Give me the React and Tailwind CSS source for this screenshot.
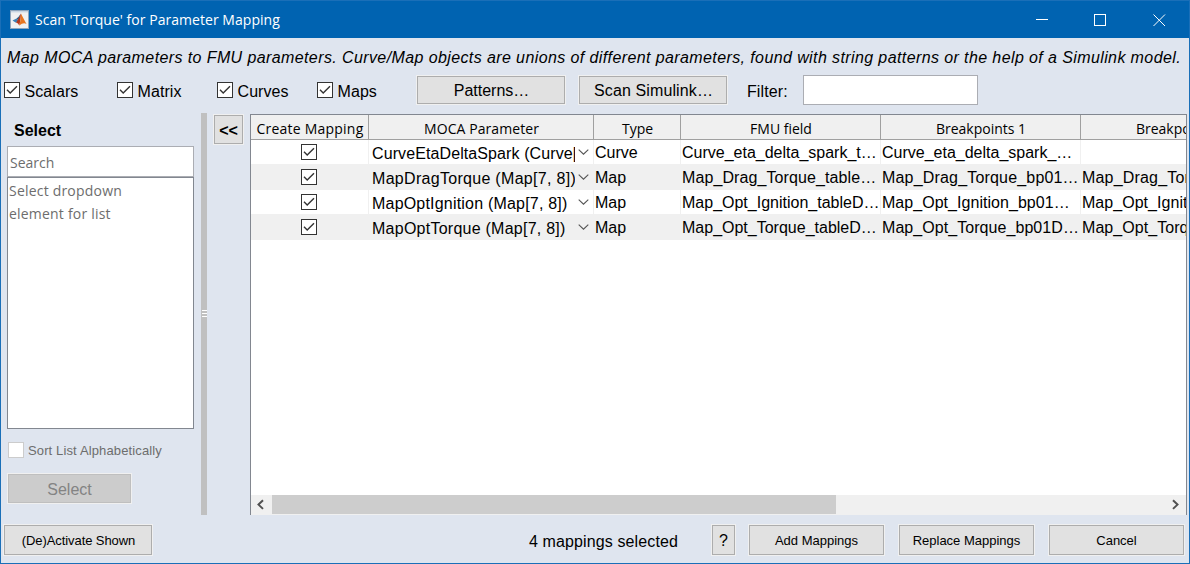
import React from 'react';

function Check({ className = '' }) {
  return (
    <span className={`block h-4 w-4 shrink-0 border border-[#333333] bg-white ${className}`}>
      <svg viewBox="0 0 14 14" className="block h-[14px] w-[14px]" fill="none" stroke="#333333" strokeWidth="1.4">
        <path d="M2 6.8 L5.2 10 L12 3.2" />
      </svg>
    </span>
  );
}

function Button({ className = '', children }) {
  return (
    <button className={`flex shrink-0 items-center justify-center whitespace-nowrap border border-[#adadad] bg-[#e1e1e1] pt-[2px] outline outline-1 outline-[#f0f0f0] ${className}`}>
      {children}
    </button>
  );
}

function Option({ label, className }) {
  return (
    <label className={`flex shrink-0 items-center gap-[4.5px] whitespace-nowrap ${className}`}>
      <Check />
      <span className="pt-[3px] tracking-[0.08px]">{label}</span>
    </label>
  );
}

function TitleBar() {
  return (
    <header className="flex h-[37px] shrink-0 items-center bg-[#0063b1] pl-[9px] text-white">
      <svg viewBox="0 0 19 19" className="h-[19px] w-[19px]">
        <rect width="19" height="19" fill="#8fa5bb" />
        <rect x="1" y="2" width="17" height="16" fill="#f1f1f1" />
        <rect x="1" y="1" width="17" height="1.4" fill="#c9d6e3" />
        <path d="M2.5 10.5 L6.5 8.6 L8.3 10.2 L6 12.8 Z" fill="#3d7fb5" />
        <path d="M6.5 8.6 Q8.6 7.2 11 3.5 L8.3 10.2 Z" fill="#2b5c86" />
        <path d="M6 12.8 Q8.8 8.5 11 3.5 Q10.8 10 9.3 15.5 Q8 12.4 6 12.8 Z" fill="#b5381c" />
        <path d="M11 3.5 Q12.6 7 16.5 14 Q13.5 11.8 9.3 15.5 Q11 9.5 11 3.5 Z" fill="#e8761f" />
      </svg>
      <h1 className="ml-[6px] flex-1 whitespace-nowrap font-['Open_Sans',sans-serif] text-[14px] font-normal tracking-[0.04px]">
        Scan 'Torque' for Parameter Mapping
      </h1>
      <svg viewBox="0 0 131 14" className="mr-[22px] h-[14px] w-[131px]" fill="none" stroke="#ffffff" shapeRendering="crispEdges">
        <path d="M0 6.5 H12" />
        <rect x="58.5" y="1.5" width="11" height="11" />
        <path d="M117.5 1.5 L129 13 M129 1.5 L117.5 13" shapeRendering="auto" />
      </svg>
    </header>
  );
}

const rows = [
  { param: 'CurveEtaDeltaSpark (Curve[', type: 'Curve', fmu: 'Curve_eta_delta_spark_t…', bp1: 'Curve_eta_delta_spark_…', bp2: '', paramTrack: 'tracking-[0.1px]', fmuTrack: '', bpTrack: '' },
  { param: 'MapDragTorque (Map[7, 8])', type: 'Map', fmu: 'Map_Drag_Torque_table…', bp1: 'Map_Drag_Torque_bp01…', bp2: 'Map_Drag_Torque', paramTrack: 'tracking-[0.3px]', fmuTrack: 'tracking-[0.1px]', bpTrack: 'tracking-[0.18px]' },
  { param: 'MapOptIgnition (Map[7, 8])', type: 'Map', fmu: 'Map_Opt_Ignition_tableD…', bp1: 'Map_Opt_Ignition_bp01…', bp2: 'Map_Opt_Ignition', paramTrack: 'tracking-[0.2px]', fmuTrack: '', bpTrack: 'tracking-[0.04px]' },
  { param: 'MapOptTorque (Map[7, 8])', type: 'Map', fmu: 'Map_Opt_Torque_tableD…', bp1: 'Map_Opt_Torque_bp01D…', bp2: 'Map_Opt_Torque', paramTrack: 'tracking-[0.25px]', fmuTrack: '', bpTrack: 'tracking-[0.06px]' },
];

const columns = 'grid grid-cols-[118px_225px_87px_200px_200px_200px]';

function Row({ row, odd }) {
  const cell = 'flex items-center overflow-hidden border-r border-[#f0f0f0] pt-[2px] pl-px whitespace-nowrap';
  return (
    <div className={`${columns} shrink-0 leading-[20px] ${odd ? 'h-[26px] bg-[#f0f0f0]' : 'h-[24px] bg-white'}`}>
      <div className="flex items-center justify-center border-r border-[#f0f0f0] pr-[2px]">
        <Check />
      </div>
      <div className="flex items-center border-r border-[#f0f0f0] pl-[3px]">
        <span className={`w-[203px] overflow-hidden pt-[4px] whitespace-nowrap ${row.paramTrack}`}>{row.param}</span>
        <svg viewBox="0 0 11 6" className="ml-[3px] h-[6px] w-[11px] shrink-0" fill="none" stroke="#555555" strokeWidth="1.1">
          <path d="M0.7 0.6 L5.5 5.2 L10.3 0.6" />
        </svg>
      </div>
      <div className={cell}>{row.type}</div>
      <div className={`${cell} ${row.fmuTrack}`}>{row.fmu}</div>
      <div className={`${cell} ${row.bpTrack}`}>{row.bp1}</div>
      <div className={`${cell} ${row.bpTrack}`}>{row.bp2}</div>
    </div>
  );
}

function MappingTable() {
  const head = 'flex items-center justify-center border-r border-[#a0a0a0] pt-[3px] pl-px';
  return (
    <section className="mt-px flex w-[937px] shrink-0 flex-col overflow-hidden border-x border-t border-[#828790] bg-white">
      <div className={`${columns} h-[25px] shrink-0 border-b border-[#a0a0a0] bg-[#f0f0f0] font-['Open_Sans',sans-serif] text-[14px] leading-[20px] whitespace-nowrap`}>
        <div className={`${head} tracking-[0.22px]`}>Create Mapping</div>
        <div className={`${head} tracking-[0.08px]`}>MOCA Parameter</div>
        <div className={head}>Type</div>
        <div className={head}>FMU field</div>
        <div className={head}>Breakpoints 1</div>
        <div className={head}>Breakpoints 2</div>
      </div>
      {rows.map((row, i) => (
        <Row key={row.param} row={row} odd={i % 2 === 1} />
      ))}
      <div className="flex-1" />
      <div className="flex h-5 shrink-0 items-center bg-[#f0f0f0]">
        <svg viewBox="0 0 21 20" className="h-5 w-[21px]" fill="none" stroke="#505050" strokeWidth="2">
          <path d="M12 5.3 L7.5 9.6 L12 13.9" />
        </svg>
        <div className="mb-px h-[19px] w-[564px] bg-[#cdcdcd]" />
        <div className="flex-1" />
        <svg viewBox="0 0 21 20" className="h-5 w-[21px]" fill="none" stroke="#505050" strokeWidth="2">
          <path d="M8 5.3 L12.5 9.6 L8 13.9" />
        </svg>
      </div>
    </section>
  );
}

function Sidebar() {
  return (
    <aside className="flex w-[193px] shrink-0 flex-col pl-[6px]">
      <h2 className="flex h-[33px] items-center pt-[2px] pl-[7px] text-[16px] font-bold">Select</h2>
      <div className="flex h-[31px] shrink-0 items-center border border-[#abadb3] bg-white pt-[2px] pl-[2px] font-['Open_Sans',sans-serif] text-[14px] text-[#6d6d6d]">
        Search
      </div>
      <div className="h-[252px] shrink-0 border border-[#828790] bg-white pt-px pl-px font-['Open_Sans',sans-serif] text-[14px] leading-[23px] tracking-[0.2px] text-[#6d6d6d]">
        Select dropdown
        <br />
        element for list
      </div>
      <label className="mt-[13px] ml-px flex h-4 items-center gap-1 text-[13px] tracking-[0.13px] whitespace-nowrap text-[#6d6d6d]">
        <span className="block h-4 w-4 shrink-0 border border-[#cccccc] bg-white" />
        <span className="pt-[2px]">Sort List Alphabetically</span>
      </label>
      <button className="mt-4 ml-px h-[29px] w-[123px] border border-[#bfbfbf] bg-[#cccccc] pt-[2px] text-[16px] text-[#838383] outline outline-1 outline-[#f0f0f0]">
        Select
      </button>
    </aside>
  );
}

export default function App() {
  return (
    <div className="flex h-[564px] w-[1190px] flex-col overflow-hidden border border-[#1a6fb8] bg-[#dfe5ef] font-['Liberation_Sans',sans-serif] text-[16px] leading-[24px] text-black">
      <TitleBar />
      <p className="flex h-[37px] shrink-0 items-center pt-[2px] pl-[6px] tracking-[0.397px] whitespace-nowrap italic">
        Map MOCA parameters to FMU parameters. Curve/Map objects are unions of different parameters, found with string patterns or the help of a Simulink model.
      </p>
      <div className="flex h-[30px] shrink-0 items-center pl-[3px]">
        <Option label="Scalars" className="w-[113px]" />
        <Option label="Matrix" className="w-[100px]" />
        <Option label="Curves" className="w-[100px]" />
        <Option label="Maps" className="w-[100px]" />
        <Button className="h-[28px] w-[148px] pl-px">Patterns…</Button>
        <Button className="ml-[14px] h-[28px] w-[148px] pl-px tracking-[0.12px]">Scan Simulink…</Button>
        <span className="ml-5 w-[56px] pt-[3px] tracking-[0.1px]">Filter:</span>
        <div className="h-[30px] w-[175px] border border-[#abadb3] bg-white" />
      </div>
      <main className="mt-2 flex h-[402px] shrink-0">
        <Sidebar />
        <div className="ml-[7px] flex w-[6px] shrink-0 flex-col items-end justify-center gap-[2px] bg-[#c0c0c0] pb-px">
          <span className="h-px w-[5px] bg-white" />
          <span className="h-px w-[5px] bg-white" />
          <span className="h-px w-[5px] bg-white" />
        </div>
        <Button className="mt-[2px] mr-[7px] ml-[7px] h-[29px] w-[29px] font-bold">&lt;&lt;</Button>
        <MappingTable />
      </main>
      <footer className="flex shrink-0 items-center pt-[10px] pl-[3px] text-[13px]">
        <Button className="h-[30px] w-[148px] pl-px tracking-[-0.08px]">(De)Activate Shown</Button>
        <span className="ml-[377px] w-[183px] pt-[3px] text-[16px] tracking-[0.12px]">4 mappings selected</span>
        <Button className="h-[30px] w-[23px] text-[16px]">?</Button>
        <Button className="ml-[14px] h-[30px] w-[135px]">Add Mappings</Button>
        <Button className="ml-[15px] h-[30px] w-[135px]">Replace Mappings</Button>
        <Button className="ml-[15px] h-[30px] w-[135px]">Cancel</Button>
      </footer>
    </div>
  );
}
